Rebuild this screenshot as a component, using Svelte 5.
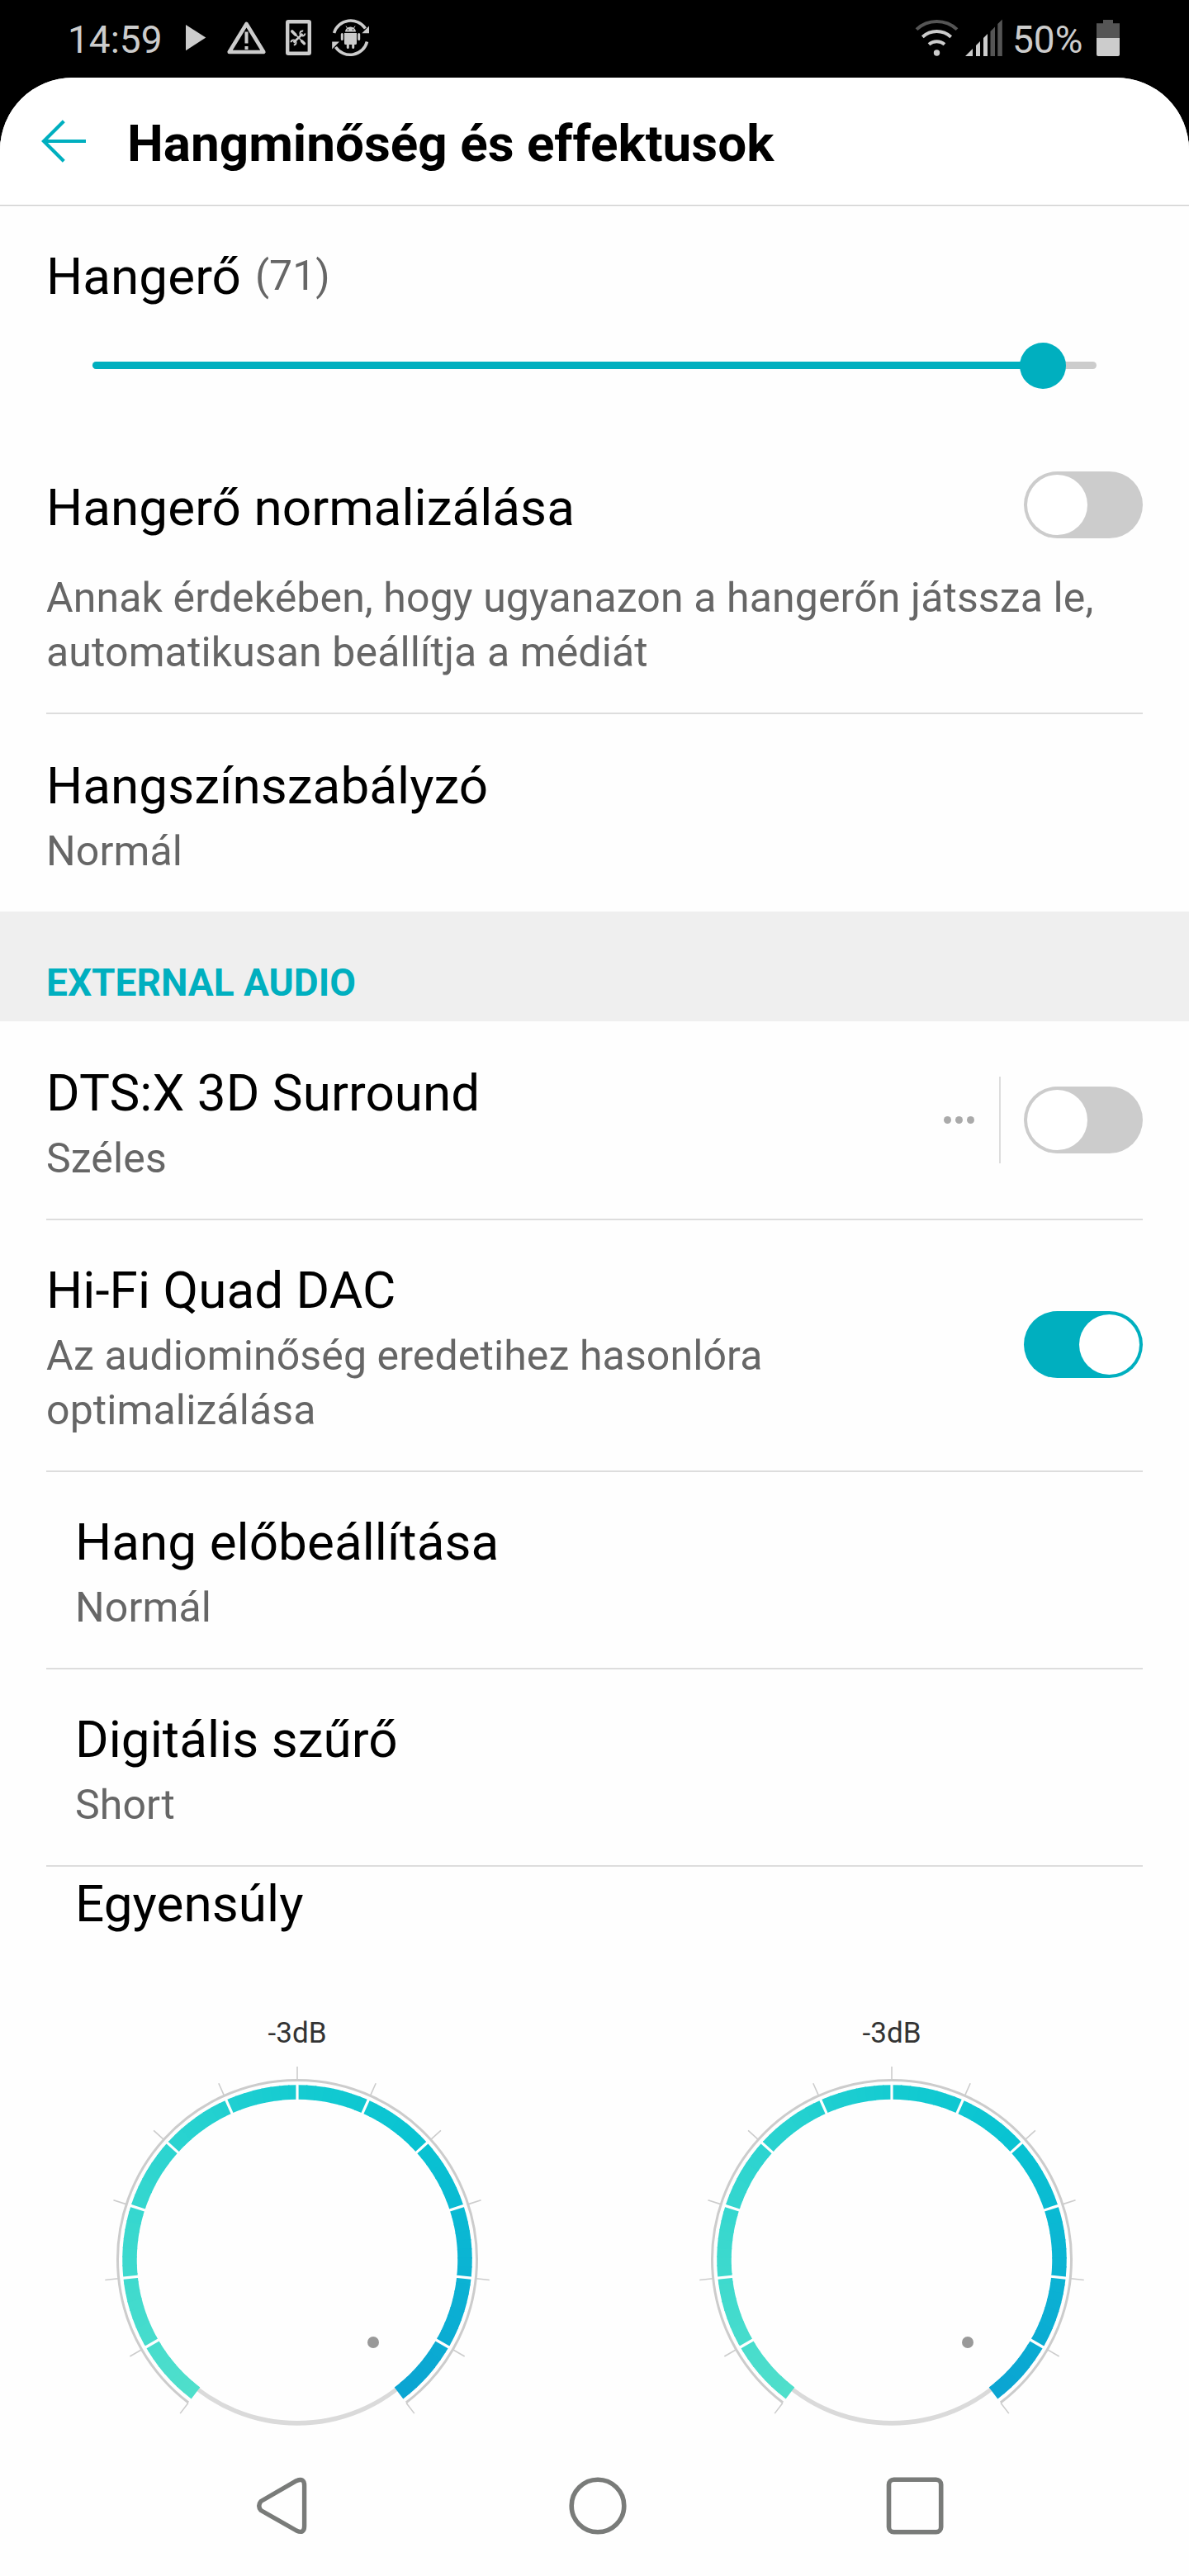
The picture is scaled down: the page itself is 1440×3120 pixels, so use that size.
<script>
  const volume = 71;
  const volumeMax = 75;

  const balance = [
    { channel: 'left', label: '-3dB' },
    { channel: 'right', label: '-3dB' }
  ];

  // Gauge geometry: angles are degrees clockwise from the top.
  const END = 142.7;
  const ticks = [-END, -120, -96, -72, -48, -24, 0, 24, 48, 72, 96, 120, END];
  const gaps = ticks.slice(1, -1);

  function point(r, deg) {
    const a = (deg * Math.PI) / 180;
    return [r * Math.sin(a), -r * Math.cos(a)];
  }

  function arc(r, from, to) {
    const [x1, y1] = point(r, from);
    const [x2, y2] = point(r, to);
    const large = to - from > 180 ? 1 : 0;
    return `M${x1.toFixed(2)} ${y1.toFixed(2)}A${r} ${r} 0 ${large} 1 ${x2.toFixed(2)} ${y2.toFixed(2)}`;
  }

  function radial(r1, r2, deg) {
    const [x1, y1] = point(r1, deg);
    const [x2, y2] = point(r2, deg);
    return `M${x1.toFixed(2)} ${y1.toFixed(2)}L${x2.toFixed(2)} ${y2.toFixed(2)}`;
  }

  const stops = [
    [-143, [80, 223, 203]],
    [-90, [60, 217, 206]],
    [-45, [42, 211, 208]],
    [0, [20, 203, 209]],
    [45, [9, 195, 210]],
    [90, [11, 180, 211]],
    [143, [11, 164, 210]]
  ];

  function colour(deg) {
    let i = 0;
    while (i < stops.length - 2 && deg > stops[i + 1][0]) i++;
    const [a, ca] = stops[i];
    const [b, cb] = stops[i + 1];
    const t = (deg - a) / (b - a);
    return `rgb(${ca.map((c, k) => Math.round(c + (cb[k] - c) * t)).join(',')})`;
  }

  const SLICES = 96;
  const step = (2 * END) / SLICES;
  const slices = Array.from({ length: SLICES }, (_, i) => {
    const from = -END + i * step;
    return {
      d: arc(203, from, Math.min(END, from + step + 0.4)),
      fill: colour(from + step / 2)
    };
  });
  const tickPath = ticks.map((t) => radial(218, 234, t)).join('');
  const gapPath = gaps.map((t) => radial(190, 214, t)).join('');
</script>

{#snippet toggle(on)}
  <span class="toggle" class:on role="switch" aria-checked={on} aria-label="switch"><span class="knob"></span></span>
{/snippet}

<div class="screen">
  <div class="status">
    <span class="clock">14:59</span>
    <svg class="left-icons" width="232" height="50" viewBox="220 20 232 50">
      <path d="M225 30L249.3 45.5L225 61.2Z" fill="#ccc" />
      <path d="M298.5 29L319.3 63H277.7Z" fill="none" stroke="#ccc" stroke-width="4.6" stroke-linejoin="round" />
      <path d="M296.5 38.500h4v14h-4zM296.5 56h4v4h-4z" fill="#ccc" />
      <rect x="348.2" y="26.2" width="26.6" height="38.600" rx="1" fill="none" stroke="#ccc" stroke-width="4.4" />
      <path d="M355 39L368 52" stroke="#ccc" stroke-width="1.6" />
      <path d="M353.8 38l4 4" stroke="#ccc" stroke-width="3.6" stroke-linecap="round" />
      <path d="M365.5 49.800l3 3" stroke="#ccc" stroke-width="3.4" stroke-linecap="round" />
      <path d="M355.500 51.500L366.500 41" stroke="#ccc" stroke-width="2.6" />
      <path d="M367.200 37.500a3 3 0 1 0 2.200 3M352.500 51.300a3 3 0 1 1 3.300 3.200" fill="none" stroke="#ccc" stroke-width="2" />
      <path d="M404.600 40A21 20.500 0 0 1 442.500 34.500" fill="none" stroke="#ccc" stroke-width="3.6" />
      <path d="M447 31.500V40.300H438.300Z" fill="#ccc" />
      <path d="M444.500 50.500A21 20.500 0 0 1 406.500 57" fill="none" stroke="#ccc" stroke-width="3.6" />
      <path d="M402.200 59.500V50.500H411Z" fill="#ccc" />
      <path d="M418 38.400a6.500 5.800 0 0 1 13 0zM417 40h15v12.500a1.500 1.500 0 0 1-1.500 1.500h-12a1.500 1.500 0 0 1-1.500-1.500z" fill="#ccc" />
      <path d="M414.300 41.500v6M434.700 41.500v6M421.300 53v4.500M427.700 53v4.500" stroke="#ccc" stroke-width="3" stroke-linecap="round" />
      <path d="M420.500 34l-1.500-2.500M428.500 34l1.500-2.500" stroke="#ccc" stroke-width="1" />
      <circle cx="421.5" cy="36" r="0.8" fill="#000" />
      <circle cx="427.5" cy="36" r="0.8" fill="#000" />
    </svg>
    <svg class="signal-icons" width="110" height="50" viewBox="1106 20 110 50">
      <path d="M1110 35.600A36 36 0 0 1 1159 35.600" fill="none" stroke="#555" stroke-width="4" />
      <path d="M1117.300 44.700A25.500 25.500 0 0 1 1151.700 44.700" fill="none" stroke="#ccc" stroke-width="4" />
      <path d="M1125 53.800A14.500 14.500 0 0 1 1144 53.800" fill="none" stroke="#ccc" stroke-width="4" />
      <circle cx="1134.5" cy="64" r="3.7" fill="#ccc" />
      <path d="M1169 68l9-9v9zM1182 68v-13l5-5v18zM1191 68v-22l5-5v27z" fill="#ccc" />
      <path d="M1199.500 68v-30l5.500-5.500v35.500zM1208.300 68v-39l5.500-5.500v44.500z" fill="#555" />
    </svg>
    <span class="percent">50%</span>
    <svg width="28" height="50" viewBox="1328 20 28 50">
      <path d="M1328 46V28.300h8V24h12v4.300h8V46z" fill="#555" />
      <path d="M1328 46h28v20a2 2 0 0 1-2 2h-24a2 2 0 0 1-2-2z" fill="#ccc" />
    </svg>
  </div>

  <main>
    <header>
      <svg class="back" width="56" height="56" viewBox="50 143 56 56">
        <path d="M104 171H54M77.300 146.800L53 171L77.300 195.200" fill="none" stroke="#00afbf" stroke-width="4.2" />
      </svg>
      <h1>Hangminőség és effektusok</h1>
    </header>

    <section class="volume">
      <div class="volume-label">
        <h2>Hangerő</h2>
        <span class="value">({volume})</span>
      </div>
      <div class="track">
        <div class="fill" style="width: {(volume / volumeMax) * 100}%"><span class="thumb"></span></div>
      </div>
    </section>

    <section class="normalize">
      <div class="normalize-head">
        <h2>Hangerő normalizálása</h2>
        {@render toggle(false)}
      </div>
      <p>Annak érdekében, hogy ugyanazon a hangerőn játssza le,<br />automatikusan beállítja a médiát</p>
    </section>

    <section class="row equalizer">
      <div class="text">
        <h2>Hangszínszabályzó</h2>
        <p>Normál</p>
      </div>
    </section>

    <div class="category">EXTERNAL AUDIO</div>

    <section class="row first">
      <div class="text">
        <h2>DTS:X 3D Surround</h2>
        <p>Széles</p>
      </div>
      <div class="actions">
        <span class="more"><i></i><i></i><i></i></span>
        <span class="bar"></span>
        {@render toggle(false)}
      </div>
    </section>

    <section class="row tall">
      <div class="text">
        <h2>Hi-Fi Quad DAC</h2>
        <p>Az audiominőség eredetihez hasonlóra<br />optimalizálása</p>
      </div>
      <div class="actions">{@render toggle(true)}</div>
    </section>

    <section class="row nested">
      <div class="text">
        <h2>Hang előbeállítása</h2>
        <p>Normál</p>
      </div>
    </section>

    <section class="row nested">
      <div class="text">
        <h2>Digitális szűrő</h2>
        <p>Short</p>
      </div>
    </section>

    <section class="balance">
      <h2>Egyensúly</h2>
      <div class="gauges">
        {#each balance as side (side.channel)}
          <div class="gauge">
            <span class="db">{side.label}</span>
            <svg width="480" height="450" viewBox="-240 -240 480 450">
              <circle cx="0" cy="3.2" r="197.6" fill="#dadada" />
              <circle cx="0" cy="0" r="195" fill="#fefefe" />
              <path d={arc(217.5, -END, END)} fill="none" stroke="#ccc" stroke-width="3" />
              <path d={tickPath} stroke="#ccc" stroke-width="1.6" />
              {#each slices as s}
                <path d={s.d} fill="none" stroke={s.fill} stroke-width="17.5" />
              {/each}
              <path d={gapPath} stroke="#fefefe" stroke-width="3.2" />
              <circle cx="92" cy="100" r="7" fill="#999" />
            </svg>
          </div>
        {/each}
      </div>
    </section>

    <nav>
      <svg width="68" height="76" viewBox="308 2997 68 76">
        <path d="M316 3029.500L359 3004.700Q368.600 3000.500 368.600 3010.500V3059.500Q368.600 3069.500 359 3065L316 3040.500Q311.500 3035 316 3029.500Z" fill="none" stroke="#797b79" stroke-width="5.4" stroke-linejoin="round" />
      </svg>
      <svg width="76" height="76" viewBox="-38 -38 76 76">
        <circle r="31.8" fill="none" stroke="#797b79" stroke-width="5.6" />
      </svg>
      <svg width="76" height="76" viewBox="-38 -38 76 76">
        <rect x="-31.5" y="-31.8" width="63.2" height="63.6" rx="6" fill="none" stroke="#797b79" stroke-width="5.6" />
      </svg>
    </nav>
  </main>
</div>

<style>
  :global(body) {
    margin: 0;
    background: #000;
  }
  .screen {
    width: 1440px;
    height: 3120px;
    display: flex;
    flex-direction: column;
    overflow: hidden;
    background: #000;
    font-family: Roboto, 'Liberation Sans', sans-serif;
    color: #000;
  }
  svg {
    display: block;
    flex: none;
  }
  h1,
  h2,
  p {
    margin: 0;
  }
  .status {
    display: flex;
    align-items: flex-start;
    height: 94px;
    box-sizing: border-box;
    padding: 20px 84px 0 82px;
    color: #ccc;
    font-size: 46px;
    line-height: 54px;
  }
  .clock {
    width: 138px;
    margin-top: 1px;
  }
  .signal-icons {
    margin-left: auto;
  }
  .percent {
    width: 102px;
    margin: 1px 0 0 10px;
  }
  main {
    flex: 1;
    display: flex;
    flex-direction: column;
    border-radius: 88px 88px 0 0;
    background: #fefefe;
    overflow: hidden;
  }
  header {
    display: flex;
    align-items: center;
    height: 155px;
    box-sizing: border-box;
    background: #fff;
    border-bottom: 1px solid #ccc;
    box-shadow: 0 1px 0 #eee;
    padding-left: 50px;
    flex: none;
  }
  header .back {
    margin-right: 48px;
  }
  h1 {
    font-size: 62px;
    line-height: 73px;
    font-weight: 700;
    padding-top: 4px;
  }
  h2 {
    font-size: 62px;
    line-height: 73px;
    font-weight: 400;
    letter-spacing: 0.05px;
  }
  p {
    font-size: 50px;
    line-height: 66px;
    letter-spacing: 0.12px;
    color: #666;
  }
  .volume {
    height: 322px;
    box-sizing: border-box;
    padding: 49px 56px 0;
    flex: none;
  }
  .volume-label {
    display: flex;
    align-items: flex-start;
    gap: 17px;
    height: 73px;
  }
  .value {
    font-size: 50px;
    line-height: 66px;
    color: #666;
    padding-top: 3px;
  }
  .track {
    width: 1216px;
    height: 9px;
    margin: 67px 0 0 56px;
    border-radius: 5px;
    background: #ccc;
  }
  .fill {
    display: flex;
    justify-content: flex-end;
    align-items: center;
    height: 9px;
    border-radius: 5px;
    background: #00afbf;
  }
  .thumb {
    flex: none;
    width: 56px;
    height: 56px;
    margin: 1px -28px 0 0;
    border-radius: 50%;
    background: #00afbf;
  }
  .normalize {
    height: 292px;
    box-sizing: border-box;
    padding: 0 56px;
    flex: none;
  }
  .normalize-head {
    display: flex;
    justify-content: space-between;
    height: 120px;
  }
  .normalize-head h2 {
    padding-top: 7px;
  }
  .toggle {
    display: flex;
    flex: none;
    box-sizing: border-box;
    width: 144px;
    height: 81px;
    padding: 4px;
    border-radius: 41px;
    background: #ccc;
  }
  .toggle.on {
    justify-content: flex-end;
    background: #00afbf;
  }
  .knob {
    width: 73px;
    height: 73px;
    border-radius: 50%;
    background: #fff;
  }
  .row {
    display: flex;
    justify-content: space-between;
    box-sizing: border-box;
    height: 239px;
    margin: 0 56px;
    padding-top: 48px;
    border-top: 2px solid #ddd;
    flex: none;
  }
  .row.equalizer {
    height: 241px;
    padding-top: 50px;
  }
  .row.first {
    border-top: 0;
    padding-top: 50px;
  }
  .row.tall {
    height: 305px;
  }
  .row.nested {
    padding-left: 35px;
  }
  .text {
    display: flex;
    flex-direction: column;
    gap: 10px;
  }
  .actions {
    display: flex;
    align-items: center;
    align-self: flex-start;
    height: 105px;
    margin-top: 17px;
  }
  .tall .actions {
    margin-top: 50px;
  }
  .more {
    display: flex;
    gap: 5px;
    margin-right: 30px;
  }
  .more i {
    width: 9px;
    height: 9px;
    border-radius: 50%;
    background: #aaa;
  }
  .bar {
    width: 2px;
    height: 105px;
    margin-right: 28px;
    background: #ddd;
  }
  .category {
    height: 133px;
    box-sizing: border-box;
    padding: 59px 56px 0;
    background: #efefef;
    color: #00afbf;
    font-size: 46px;
    line-height: 54px;
    font-weight: 700;
    flex: none;
  }
  .balance {
    flex: 1;
  }
  .balance h2 {
    margin: 0 56px;
    padding: 8px 0 0 35px;
    border-top: 2px solid #ddd;
  }
  .gauges {
    display: flex;
    padding-top: 100px;
  }
  .gauge {
    display: flex;
    flex: 1;
    flex-direction: column;
    align-items: center;
    gap: 13px;
  }
  .db {
    font-size: 35px;
    line-height: 42px;
    color: #333;
  }
  nav {
    display: grid;
    grid-template-columns: 378px 384px auto;
    padding: 0 0 47px 308px;
    flex: none;
  }
</style>
